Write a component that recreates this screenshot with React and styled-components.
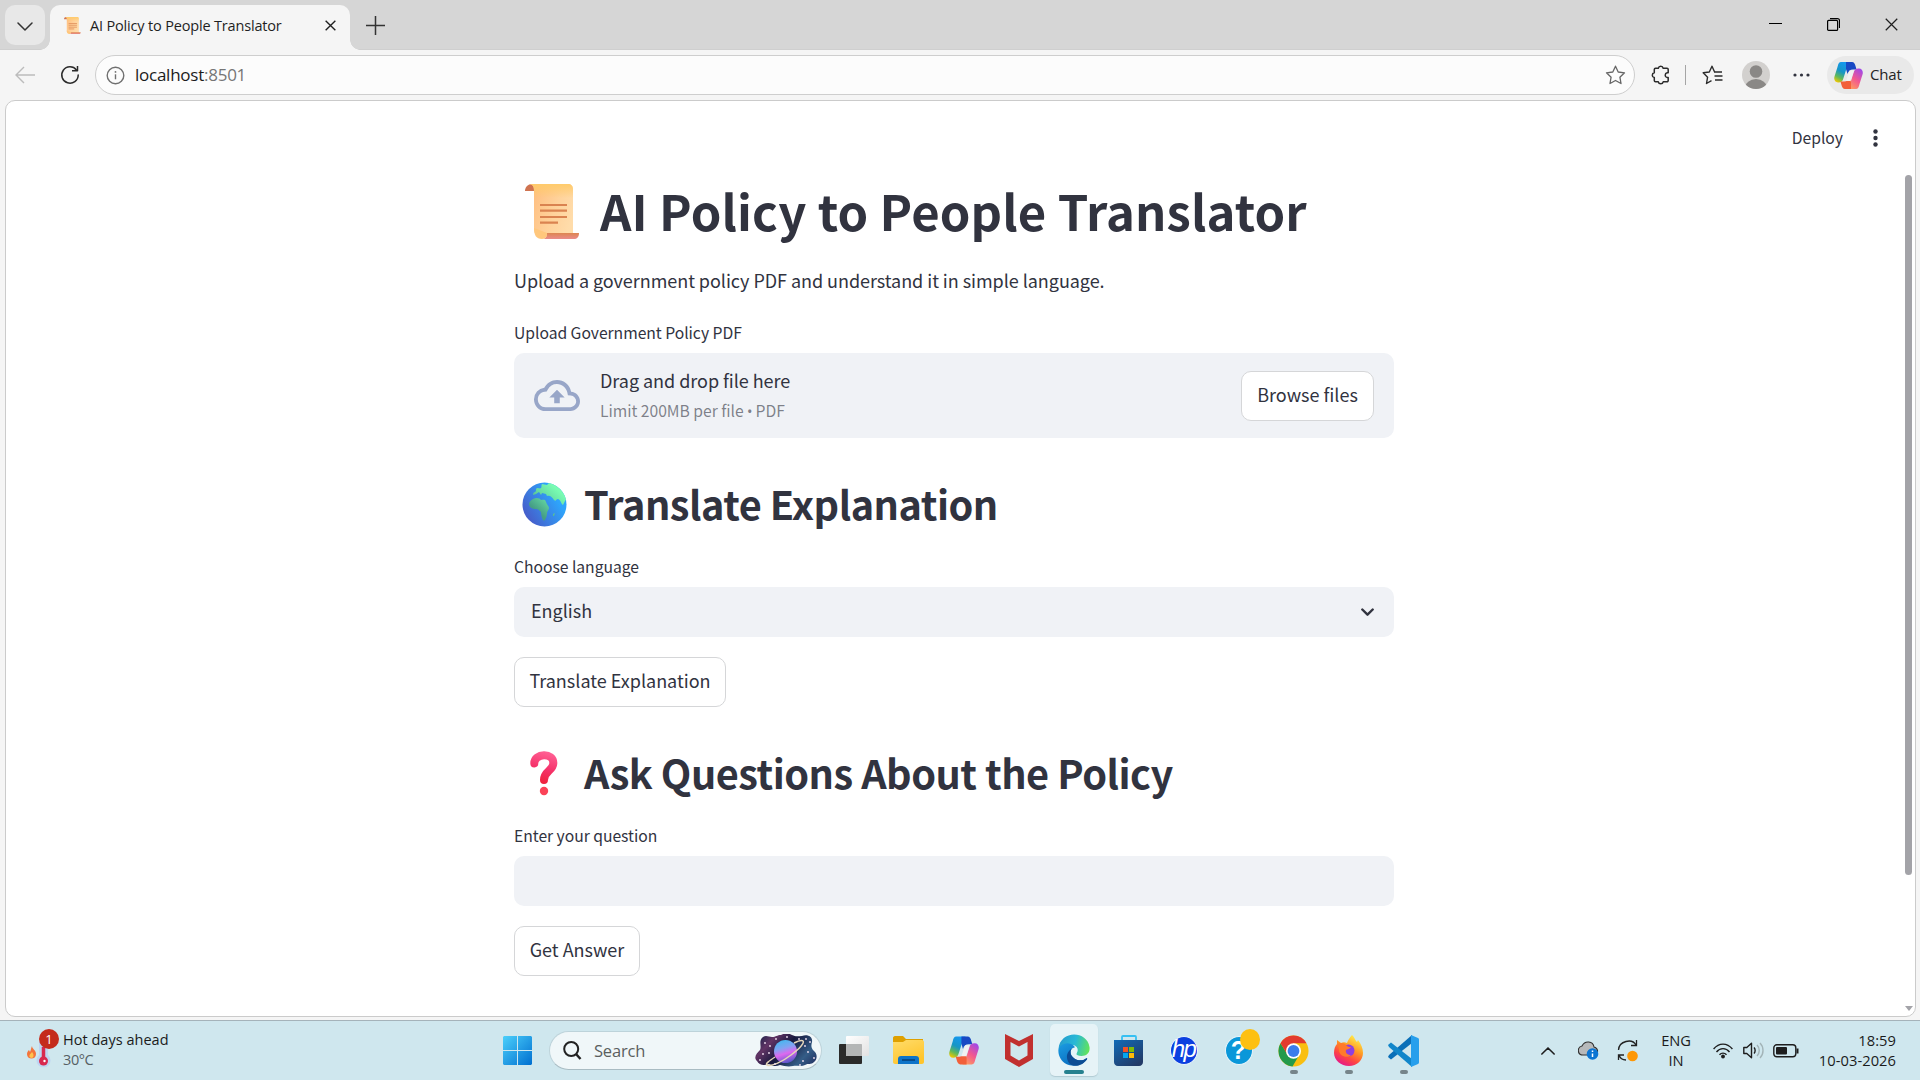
import React from "react";
import styled, { createGlobalStyle } from "styled-components";

const GlobalStyle = createGlobalStyle`
  * {
    box-sizing: border-box;
  }

  body {
    margin: 0;
    overflow: hidden;
    background: #f5f5f5;
  }

  svg {
    display: block;
    flex: none;
  }
`;

const sourceSans = `"Noto Sans CJK SC", "Source Sans Pro", sans-serif`;
const segoe = `"Open Sans", "Segoe UI", sans-serif`;

/* ---------- emoji ---------- */

const ScrollEmoji = ({ size = 55 }) => (
  <svg width={size} height={size} viewBox="0 0 55 55">
    <defs>
      <linearGradient id="paper" x1="0" y1="0.2" x2="1" y2="0.6">
        <stop offset="0" stopColor="#ffbd7e" />
        <stop offset="0.6" stopColor="#ffd29b" />
        <stop offset="1" stopColor="#ffdcaa" />
      </linearGradient>
      <linearGradient id="paperTop" x1="0" y1="0" x2="0" y2="1">
        <stop offset="0" stopColor="#ffcb6b" />
        <stop offset="1" stopColor="#ffcb6b" stopOpacity="0" />
      </linearGradient>
      <linearGradient id="curl" x1="0" y1="0" x2="0" y2="1">
        <stop offset="0" stopColor="#dd8550" />
        <stop offset="1" stopColor="#ea8c8b" />
      </linearGradient>
    </defs>
    <path d="M0 7C0 3 3 0 7 0h4v7z" fill="#cf7350" />
    <path d="M5 0h38c3 0 5 2 5 5v47H16c-5 0-7-3-7-7V7C9 3 8 1 5 0z" fill="url(#paper)" />
    <path d="M5 0h38c3 0 5 2 5 5v9H9V7C9 3 8 1 5 0z" fill="url(#paperTop)" />
    <path d="M22 49h32c0 4-2 6-5 6H17c3 0 5-2 5-6z" fill="url(#curl)" />
    <path d="M9 44c0 7 2 11 8 11 4 0 5-3 5-6z" fill="#ffc77c" />
    <path d="M15 21h27M15 26.600h27M15 33h27M15 38.600h18" stroke="#da8350" strokeWidth="2.200" />
  </svg>
);

const GlobeEmoji = () => (
  <svg width="45" height="45" viewBox="0 0 45 45">
    <defs>
      <linearGradient id="sea" x1="0.850" y1="0.500" x2="0.200" y2="0.900">
        <stop offset="0" stopColor="#2ea4fb" />
        <stop offset="1" stopColor="#4560cc" />
      </linearGradient>
      <linearGradient id="land" gradientUnits="userSpaceOnUse" x1="38" y1="10" x2="18" y2="32">
        <stop offset="0" stopColor="#79fcb2" />
        <stop offset="0.450" stopColor="#66dba3" />
        <stop offset="1" stopColor="#459e85" />
      </linearGradient>
      <clipPath id="globeClip">
        <circle cx="22.500" cy="22.500" r="22" />
      </clipPath>
    </defs>
    <circle cx="22.500" cy="22.500" r="22" fill="url(#sea)" />
    <g clipPath="url(#globeClip)" fill="url(#land)">
      <path d="M20 2l5 1 3-3c9 0 17 7 18 15l-3 4-2 4c-2-1-2-5-5-6-2 0-2 3-4 1-2-3-4-5-7-4l-1-2-4-1-1 2-2-3-3 2-3 1c0-2 1-3 2-3 2-1 0-3 2-4 2 0 3 1 4 0 1-2 0-3 1-4z" />
      <path d="M11 17c3-2 7-1 8 1 3 0 4-1 5 2 1 3 3 4 3 6 0 2-2 3-2 5 0 3-1 6-3 8-2-2-3-6-3-9-2-2-3-3-5-3-4 0-7-2-7-5 0-2 2-4 4-5z" />
      <path d="M31 32l2-1-1 3-1 0z" />
    </g>
  </svg>
);

const QuestionEmoji = () => (
  <svg width="45" height="45" viewBox="0 0 45 45">
    <defs>
      <linearGradient id="mark" gradientUnits="userSpaceOnUse" x1="26" y1="2" x2="18" y2="32">
        <stop offset="0" stopColor="#ff5e92" />
        <stop offset="0.500" stopColor="#f5346c" />
        <stop offset="1" stopColor="#ef213b" />
      </linearGradient>
    </defs>
    <path
      d="M12.300 12.500C12 2 32 1 31.300 12.500C31 20 22 20 22 29"
      fill="none"
      stroke="url(#mark)"
      strokeWidth="8"
      strokeLinecap="round"
    />
    <circle cx="22" cy="40" r="4.200" fill="#fb4358" />
  </svg>
);

/* ---------- browser icons ---------- */

const CopilotIcon = ({ width = 29, height = 27 }) => (
  <svg width={width} height={height} viewBox="0 0 29 27">
    <defs>
      <linearGradient id="copLeft" x1="0.600" y1="0" x2="0.200" y2="1">
        <stop offset="0" stopColor="#1597ef" />
        <stop offset="0.450" stopColor="#1696c6" />
        <stop offset="0.750" stopColor="#62b957" />
        <stop offset="1" stopColor="#f4c800" />
      </linearGradient>
      <linearGradient id="copRight" x1="0.800" y1="0" x2="0.200" y2="1">
        <stop offset="0" stopColor="#a148e8" />
        <stop offset="0.500" stopColor="#f2588f" />
        <stop offset="1" stopColor="#ff9f5c" />
      </linearGradient>
    </defs>
    <path d="M7 0h9l-3.500 6.500-3 9.500c-.8 3-2 4.500-5 4.500H4c-3 0-4.500-3-3.500-6l3-9.500C4.300 1.500 5 0 7 0z" fill="url(#copLeft)" />
    <path d="M12 0h6c2 0 3 2 3.500 4l1 3.500H19c-3 0-4.500 1.500-5.500 4.500l-1.500-5z" fill="#1849c4" />
    <path d="M22 27h-9l3.500-6.500 3-9.500c.8-3 2-4.500 5-4.500h.5c3 0 4.500 3 3.500 6l-3 9.500C24.700 25.500 24 27 22 27z" fill="url(#copRight)" />
    <path d="M17 27h-6c-2 0-3-2-3.500-4l-1-3.500H10c3 0 4.500-1.500 5.500-4.500l1.500 5z" fill="#f2603a" />
    <path d="M15.500 8.500h4.500l-3.500 10.500h-4.500z" fill="#f1f1f1" />
  </svg>
);

const ChevronIcon = ({ width = 16, height = 9, stroke = "#333", strokeWidth = 1.5, up }) => (
  <svg width={width} height={height} viewBox="0 0 16 9" fill="none" stroke={stroke} strokeWidth={strokeWidth}>
    <path d={up ? "M1 8l7-7 7 7" : "M1 1l7 7 7-7"} strokeLinecap="round" strokeLinejoin="round" />
  </svg>
);

const SelectArrow = () => (
  <svg width="13" height="9" viewBox="0 0 13 9" fill="none" stroke="#31333f" strokeWidth="2.400">
    <path d="M1.300 1.500l5.200 5.200 5.200-5.200" strokeLinecap="round" strokeLinejoin="round" />
  </svg>
);

const CloseIcon = ({ size = 12, weight = 1.5 }) => (
  <svg width={size} height={size} viewBox="0 0 12 12" stroke="#1f1f1f" strokeWidth={weight}>
    <path d="M.7.7l10.600 10.600M11.300.7L.7 11.300" />
  </svg>
);

const PlusIcon = () => (
  <svg width="19" height="19" viewBox="0 0 19 19" stroke="#333" strokeWidth="1.500">
    <path d="M9.500 0v19M0 9.500h19" />
  </svg>
);

const BackIcon = () => (
  <svg width="20" height="18" viewBox="0 0 20 18" fill="none" stroke="#bcbcbc" strokeWidth="1.400">
    <path d="M9 1L1 9l8 8M1 9h19" />
  </svg>
);

const ReloadIcon = () => (
  <svg width="20" height="20" viewBox="0 0 20 20" fill="none" stroke="#2b2b2b" strokeWidth="1.500">
    <path d="M16.500 5A8.200 8.200 0 1 0 18.200 10" strokeLinecap="round" />
    <path d="M12 5.800h5.500V1" strokeLinejoin="round" />
  </svg>
);

const InfoIcon = () => (
  <svg width="19" height="19" viewBox="0 0 19 19" fill="none" stroke="#707070" strokeWidth="1.400">
    <circle cx="9.500" cy="9.500" r="8.300" />
    <path d="M9.500 8.300v5" />
    <circle cx="9.500" cy="5.900" r="0.900" fill="#707070" stroke="none" />
  </svg>
);

const StarIcon = () => (
  <svg width="21" height="20" viewBox="0 0 21 20" fill="none" stroke="#666" strokeWidth="1.300">
    <path d="M10.500 1.200l2.700 5.800 6.300.8-4.600 4.400 1.100 6.300-5.500-3-5.500 3 1.100-6.300L1.500 7.800 7.800 7z" strokeLinejoin="round" />
  </svg>
);

const PuzzleIcon = () => (
  <svg width="19" height="20" viewBox="0 0 19 20" fill="none" stroke="#2b2b2b" strokeWidth="1.500">
    <path
      d="M4.500 3.300h2.800a2.500 2.500 0 0 1 4.900 0h3.800a1.200 1.200 0 0 1 1.200 1.200v3.200h-1a2.500 2.500 0 0 0 0 4.900h1v3a1.200 1.200 0 0 1-1.200 1.200h-3.800a2.500 2.500 0 0 1-4.900 0H4.500a1.200 1.200 0 0 1-1.200-1.200v-3a2.500 2.500 0 0 1 0-4.900V4.500a1.200 1.200 0 0 1 1.200-1.200z"
      strokeLinejoin="round"
    />
  </svg>
);

const FavoritesIcon = () => (
  <svg width="21" height="20" viewBox="0 0 21 20" fill="none" stroke="#2b2b2b" strokeWidth="1.400">
    <path d="M12.600 7L10 1.200 7.300 7 1.200 7.800l4.400 4.400-1.100 6.300L9.500 15.700" strokeLinejoin="round" />
    <path d="M12 7h8M12.500 11h8M13 15h7.500" />
  </svg>
);

const AvatarIcon = () => (
  <svg width="28" height="28" viewBox="0 0 28 28">
    <defs>
      <clipPath id="avatarClip">
        <circle cx="14" cy="14" r="14" />
      </clipPath>
    </defs>
    <g clipPath="url(#avatarClip)">
      <rect width="28" height="28" fill="#d2d0ce" />
      <circle cx="14" cy="10.500" r="6.300" fill="#8a8886" />
      <ellipse cx="14" cy="27" rx="11" ry="9" fill="#8a8886" />
    </g>
  </svg>
);

const DotsIcon = ({ vertical }) => (
  <svg width={vertical ? 5 : 17} height={vertical ? 18 : 4} viewBox={vertical ? "0 0 5 18" : "0 0 17 4"} fill="#31333f">
    {[0, 1, 2].map((i) =>
      vertical ? (
        <circle key={i} cx="2.500" cy={2.5 + i * 6.5} r="2.200" />
      ) : (
        <circle key={i} cx={2 + i * 6.5} cy="2" r="1.600" />
      )
    )}
  </svg>
);

const CloudUploadIcon = () => (
  <svg width="46" height="31" viewBox="0 4 24 16" preserveAspectRatio="none" fill="#98a6c8">
    <path d="M19.350 10.040A7.490 7.490 0 0 0 12 4C9.110 4 6.600 5.640 5.350 8.040A5.994 5.994 0 0 0 0 14c0 3.310 2.690 6 6 6h13c2.760 0 5-2.240 5-5 0-2.640-2.050-4.780-4.650-4.960zM19 18H6c-2.210 0-4-1.790-4-4 0-2.050 1.530-3.760 3.560-3.970l1.070-.11.500-.95A5.469 5.469 0 0 1 12 6c2.620 0 4.880 1.860 5.390 4.430l.3 1.500 1.530.11A2.980 2.980 0 0 1 22 15c0 1.650-1.350 3-3 3zM8 13h2.550v3h2.900v-3H16l-4-4z" />
  </svg>
);

/* ---------- taskbar icons ---------- */

const WeatherIcon = () => (
  <svg width="38" height="36" viewBox="0 0 38 36">
    <path d="M9 13c0 3 4 4 4 8 0 3-2 4.500-4.500 4.500S4 24 4 21c0-2 1-3 2-4l1 2c1-2 1-4 2-6z" fill="#f4743b" />
    <path d="M9 19c2 2 2 5 0 6-2 0-3-1-2.500-3z" fill="#ffc24d" />
    <path d="M16 8h9v14a7 7 0 1 1-9 0z" fill="#bed5f2" />
    <path d="M20.500 14v13" stroke="#d8284f" strokeWidth="3.500" />
    <circle cx="20.500" cy="28" r="4.500" fill="#d8284f" />
    <circle cx="21.500" cy="28" r="1.200" fill="#fff" />
  </svg>
);

const StartIcon = () => (
  <svg width="29" height="29" viewBox="0 0 29 29">
    <defs>
      <linearGradient id="win" gradientUnits="userSpaceOnUse" x1="0" y1="0" x2="29" y2="29">
        <stop offset="0" stopColor="#4cd0fb" />
        <stop offset="1" stopColor="#006fd0" />
      </linearGradient>
    </defs>
    <path d="M1 0h13v14H0V1zM15 0h13l1 1v13H15zM0 15h14v14H1l-1-1zM15 15h14v13l-1 1H15z" fill="url(#win)" />
  </svg>
);

const SearchIcon = () => (
  <svg width="19" height="19" viewBox="0 0 19 19" fill="none" stroke="#222" strokeWidth="2">
    <circle cx="8.200" cy="8" r="7" />
    <path d="M13 13l4.500 5" strokeWidth="2.500" />
  </svg>
);

const PlanetIcon = () => (
  <svg width="62" height="33" viewBox="0 0 62 33">
    <defs>
      <linearGradient id="space" x1="0" y1="0.300" x2="1" y2="0.800">
        <stop offset="0" stopColor="#2b2750" />
        <stop offset="0.180" stopColor="#613465" />
        <stop offset="0.450" stopColor="#17183d" />
        <stop offset="0.800" stopColor="#345d87" />
        <stop offset="1" stopColor="#263968" />
      </linearGradient>
      <linearGradient id="planet" x1="0.300" y1="0" x2="0.600" y2="1">
        <stop offset="0" stopColor="#42b8ef" />
        <stop offset="0.350" stopColor="#82a3f2" />
        <stop offset="0.600" stopColor="#dd68ef" />
        <stop offset="1" stopColor="#5557c7" />
      </linearGradient>
    </defs>
    <path
      d="M8 3c3-2 6 0 9 0 4 0 5-2 9-2 3-2 8-2 11 0 4 2 6 1 10 1 6-2 11 1 10 6-1 4-1 6 2 9 4 3 3 9 0 11-3 3-6 1-9 3-4 2-8 0-12 1-5 1-9 0-13-1-4 2-8 1-11-1-5 2-10 1-12-3-4-4 0-8 3-11 2-4-2-9 3-13z"
      fill="url(#space)"
    />
    <circle cx="30.500" cy="17.500" r="11.500" fill="url(#planet)" />
    <path d="M20 23c-6 4-10 7-8 8 4 2 15-3 24-10 8-6 14-12 12-14-1-1-5 0-9 2" fill="none" stroke="#e5d6b8" strokeWidth="1.500" />
    <g fill="#f0dff0">
      {[[10, 9], [15, 12], [8, 20], [14, 19], [5, 26], [21, 5], [32, 3], [44, 5], [51, 5], [55, 8], [50, 12], [53, 18], [48, 27], [59, 24], [45, 31], [20, 30]].map(([x, y]) => (
        <circle key={`${x}-${y}`} cx={x} cy={y} r="0.900" />
      ))}
    </g>
  </svg>
);

const TaskViewIcon = () => (
  <svg width="30" height="29" viewBox="0 0 30 29">
    <defs>
      <linearGradient id="pane" x1="0" y1="0" x2="1" y2="1">
        <stop offset="0" stopColor="#fff" />
        <stop offset="1" stopColor="#e2e2e2" />
      </linearGradient>
    </defs>
    <rect y="8" width="23" height="20" rx="1" fill="#2b2b2a" />
    <rect x="7" width="23" height="20" rx="1" fill="url(#pane)" />
    <path d="M7 8h15c.6 0 1 .4 1 1v11H8c-.6 0-1-.4-1-1z" fill="#b4b6b6" />
  </svg>
);

const ExplorerIcon = () => (
  <svg width="31" height="29" viewBox="0 0 31 29">
    <defs>
      <linearGradient id="folder" x1="0" y1="0" x2="0.500" y2="1">
        <stop offset="0" stopColor="#ffdc6b" />
        <stop offset="1" stopColor="#ffc52c" />
      </linearGradient>
    </defs>
    <path d="M0 2c0-1 .7-2 2-2h8l3 3h17v6H0z" fill="#dfa000" />
    <path d="M0 6h10l3-2h16c1 0 2 1 2 2v20c0 1-1 2-2 2H2c-1 0-2-1-2-2z" fill="url(#folder)" />
    <path d="M5 28v-5c0-2 1-3 3-3h15c2 0 3 1 3 3v5z" fill="#0e74c8" />
    <path d="M9 24h13" stroke="#063f78" strokeWidth="1.500" />
  </svg>
);

const McAfeeIcon = () => (
  <svg width="28" height="33" viewBox="0 0 28 33">
    <path d="M0 0l14 7L28 0v25l-14 8-14-8zM5.500 8v13.500L14 26.500l8.500-5V8L14 12.500z" fill="#c1302f" fillRule="evenodd" />
  </svg>
);

const EdgeIcon = () => (
  <svg width="32" height="32" viewBox="0 0 32 32">
    <defs>
      <linearGradient id="edgeTop" x1="0" y1="0.400" x2="1" y2="0.600">
        <stop offset="0" stopColor="#269cce" />
        <stop offset="0.500" stopColor="#28b8d7" />
        <stop offset="1" stopColor="#62e45a" />
      </linearGradient>
      <linearGradient id="edgeBody" x1="0" y1="0" x2="0.700" y2="1">
        <stop offset="0" stopColor="#1b9de2" />
        <stop offset="1" stopColor="#0967bb" />
      </linearGradient>
    </defs>
    <path d="M.5 15C2-4 29-4 31.500 13c.8 6-3 9-8 9-4 0-6-1.500-5-3 3-4 0-8-5-8-6 0-11 2-13 4z" fill="url(#edgeTop)" />
    <path d="M.5 15C3 10 8 8 13 10c2 .8 3.500 2 4 3.500-4 0-5 4-4 7 2 5 10 8 15 4 1-.6 1.500 0 1 .8C23 34 8 34 2.500 24.500 1 21.500 0 19 .5 15z" fill="url(#edgeBody)" />
    <path d="M17 13.500c-4 0-5 4-4 7 2 5 10 8 15 4 1-.6 1.500 0 1 .8-4 6-11 8-16 5.500-6-4-6-15 4-17.300z" fill="#0d4c94" />
    <path d="M17.500 13.500c-3 .5-5 3-4 6 1 2 3 3 5 3.500-1-1.500-1-2 0-3.500 1.500-2 .8-4.500-1-6z" fill="#e4f4f8" />
  </svg>
);

const StoreIcon = () => (
  <svg width="29" height="31" viewBox="0 0 29 31">
    <defs>
      <linearGradient id="bag" x1="0" y1="0" x2="0.700" y2="1">
        <stop offset="0" stopColor="#116bb7" />
        <stop offset="1" stopColor="#223b68" />
      </linearGradient>
    </defs>
    <path d="M8 6V2c0-.6.400-1 1-1h12c.6 0 1 .4 1 1v4" fill="none" stroke="#36c0f2" strokeWidth="1.800" />
    <path d="M0 5h29v22c0 2-1.500 4-4 4H4c-2.500 0-4-2-4-4z" fill="url(#bag)" />
    <path d="M9 12h5v5H9z" fill="#f35325" />
    <path d="M15 12h5v5h-5z" fill="#81bc06" />
    <path d="M9 18h5v5H9z" fill="#05a6f0" />
    <path d="M15 18h5v5h-5z" fill="#ffba08" />
  </svg>
);

const ChromeIcon = () => (
  <svg width="31" height="32" viewBox="0 0 31 31" preserveAspectRatio="none">
    <circle cx="15.500" cy="15.500" r="15" fill="#f9bf10" />
    <path d="M2.500 8A15 15 0 0 0 14.500 30.500L21.500 19 9.500 19z" fill="#239a4b" />
    <path d="M2.500 8A15 15 0 0 1 28.500 8H15.500L9.500 19z" fill="#e33b2e" />
    <circle cx="15.500" cy="15.500" r="7.500" fill="#fff" />
    <circle cx="15.500" cy="15.500" r="5.900" fill="#3b7ded" />
  </svg>
);

const FirefoxIcon = () => (
  <svg width="29" height="31" viewBox="0 0 29 31">
    <defs>
      <linearGradient id="fox" x1="0.800" y1="0.050" x2="0.300" y2="1">
        <stop offset="0" stopColor="#fff04d" />
        <stop offset="0.400" stopColor="#ff9a24" />
        <stop offset="0.700" stopColor="#ff4740" />
        <stop offset="1" stopColor="#e3168d" />
      </linearGradient>
    </defs>
    <path d="M18 0c3 3 3 5 5 7l1-2c3 4 5 8 5 13 0 7-6 13-14 13S0 25 0 18c0-4 1-7 3-9V5l4 3c2-1 4-1 6 0 1-3 3-6 5-8z" fill="url(#fox)" />
    <circle cx="14.500" cy="15.500" r="6" fill="#8d3fe0" />
    <path d="M4 9c3-2 7-1 9 2 1 1 3 1 4 1-1 2-4 2-5 3-1 3 2 5 5 5-4 4-12 1-12-5z" fill="#ff7a2b" />
  </svg>
);

const VsCodeIcon = () => (
  <svg width="31" height="32" viewBox="0 0 31 32">
    <path d="M0 22l3 2.500L24 8V0L1 20z" fill="#0a6fb8" />
    <path d="M0 10l3-2.500L24 24v8L1 12z" fill="#1186ca" />
    <path d="M23 0l7 3c.6.300 1 1 1 1.700v22.600c0 .7-.4 1.400-1 1.700l-7 3z" fill="#279fec" />
  </svg>
);

const CloudTrayIcon = () => (
  <svg width="21" height="19" viewBox="0 0 21 19">
    <path d="M5 14C-1 14-1 6 4 5c3-6 11-5 12 1 4 1 5 6 1 8z" fill="#b7b9ba" stroke="#303030" strokeWidth="1.100" />
    <circle cx="14.500" cy="13" r="5.800" fill="#0b75d3" />
    <path d="M14.500 12.500v3.500M14.500 9.500v1.500" stroke="#fff" strokeWidth="1.500" />
  </svg>
);

const SyncTrayIcon = () => (
  <svg width="22" height="22" viewBox="0 0 22 22" fill="none" stroke="#222" strokeWidth="1.300">
    <path d="M1.500 10C2 1 15-2 19 5M19.500 0v5.500H14M9 20C6 20 3 18 2 15M1.500 20v-5H7" />
    <circle cx="15.500" cy="16" r="5.300" fill="#fd9706" stroke="none" />
  </svg>
);

const WifiIcon = () => (
  <svg width="20" height="16" viewBox="0 0 20 16" fill="none" stroke="#1d1d1d" strokeWidth="1.400">
    <path d="M.6 6C6-.5 14-.5 19.400 6M3.500 9c3.500-4.500 9.500-4.500 13 0M6.500 11.800c2-2.300 5-2.300 7 0" />
    <circle cx="10" cy="13.500" r="1.900" fill="#1d1d1d" stroke="none" />
  </svg>
);

const VolumeIcon = () => (
  <svg width="21" height="17" viewBox="0 0 21 17" fill="none" stroke="#1d1d1d" strokeWidth="1.400">
    <path d="M.8 5.500h3L8.500 1.200v14.600L3.800 11.500h-3z" strokeLinejoin="round" />
    <path d="M11 5.500c1.500 1.500 1.500 4.500 0 6" />
    <path d="M14 3c3 3 3 8 0 11M17 1c4 4 4 11 0 15" stroke="#a3b4b8" />
  </svg>
);

const BatteryIcon = () => (
  <svg width="26" height="14" viewBox="0 0 26 14" fill="none" stroke="#1d1d1d" strokeWidth="1.400">
    <rect x="0.800" y="0.800" width="22" height="12" rx="3" />
    <path d="M24.500 4.500v5" strokeWidth="2" />
    <rect x="3" y="3" width="11" height="7.600" rx="1" fill="#1d1d1d" stroke="none" />
  </svg>
);

/* ---------- layout ---------- */

const Screen = styled.div`
  display: flex;
  flex-direction: column;
  width: 1920px;
  height: 1080px;
  background: #f5f5f5;
  overflow: hidden;
`;

const TabStrip = styled.div`
  display: flex;
  align-items: flex-end;
  height: 50px;
  padding-left: 5px;
  background: #d6d6d6;
  box-shadow: inset 0 -1px 0 #cfcfcf;
`;

const TabMenuButton = styled.div`
  display: flex;
  align-items: center;
  justify-content: center;
  width: 40px;
  height: 40px;
  margin: 0 5px 5px 0;
  padding-top: 3px;
  border-radius: 10px;
  background: #e8e8e8;
`;

const Tab = styled.div`
  position: relative;
  display: flex;
  align-items: center;
  width: 300px;
  height: 45px;
  padding: 0 14px 5px 14px;
  border-radius: 10px 10px 0 0;
  background: #f5f5f5;

  &::before,
  &::after {
    content: "";
    position: absolute;
    bottom: 0;
    width: 10px;
    height: 10px;
  }

  &::before {
    left: -10px;
    background: radial-gradient(circle at 0 0, transparent 9.5px, #f5f5f5 10px);
  }

  &::after {
    right: -10px;
    background: radial-gradient(circle at 100% 0, transparent 9.5px, #f5f5f5 10px);
  }
`;

const TabTitle = styled.span`
  flex: 1;
  margin: 2px 0 0 9px;
  color: #1f1f1f;
  font: 400 14.5px/20px ${segoe};
  letter-spacing: -0.17px;
  white-space: nowrap;
`;

const NewTab = styled.div`
  display: flex;
  align-items: center;
  height: 50px;
  padding-left: 16px;
`;

const WindowControls = styled.div`
  display: flex;
  align-items: center;
  gap: 45px;
  height: 50px;
  margin-left: auto;
  padding: 0 22px 1px 0;
`;

const MinimizeGlyph = styled.div`
  width: 13px;
  height: 1px;
  margin-bottom: 2px;
  background: #000;
`;

const Toolbar = styled.div`
  display: flex;
  align-items: center;
  height: 50px;
  padding: 0 6px 0 15px;
`;

const ToolItem = styled.div`
  margin-right: ${(p) => p.$gap}px;
`;

const AddressBar = styled.div`
  display: flex;
  align-items: center;
  width: 1540px;
  height: 40px;
  margin: 0 16px 0 15px;
  padding: 0 8px 0 10px;
  border: 1px solid #cecece;
  border-radius: 20px;
  background: #fcfcfc;
`;

const Url = styled.div`
  flex: 1;
  margin-left: 10px;
  color: #1b1b1b;
  font: 400 17px/24px ${segoe};
  letter-spacing: -0.25px;

  span {
    color: #767676;
  }
`;

const Divider = styled.div`
  width: 1px;
  height: 20px;
  margin: 0 16px 0 15px;
  background: #a5a5a5;
`;

const ChatButton = styled.div`
  display: flex;
  align-items: center;
  gap: 7px;
  width: 87px;
  height: 38px;
  margin-left: auto;
  padding-left: 7px;
  border-radius: 19px;
  background: #e9e9e9;
  color: #242424;
  font: 400 15px/20px ${segoe};
  letter-spacing: -0.2px;

  span {
    margin-bottom: 2px;
  }
`;

const PageFrame = styled.div`
  position: relative;
  height: 917px;
  margin: 0 4px 3px 5px;
  border: 1px solid #cbcbcb;
  border-radius: 10px;
  background: #fff;
`;

const AppHeader = styled.header`
  position: absolute;
  top: 24px;
  right: 37px;
  display: flex;
  align-items: center;
  gap: 30px;
  color: #31333f;
  font: 400 15.7px/26px ${sourceSans};
`;

const ScrollTrack = styled.div`
  position: absolute;
  top: 74px;
  right: 2px;
  bottom: 5px;
  display: flex;
  flex-direction: column;
  align-items: center;
  justify-content: space-between;
  width: 9px;
`;

const ScrollThumb = styled.div`
  width: 7px;
  height: 700px;
  border-radius: 4px;
  background: #a3a3a8;
`;

const ScrollArrow = styled.div`
  border: 4px solid transparent;
  border-top: 5px solid #a3a3a8;
  border-bottom: 0;
`;

const Main = styled.main`
  display: flex;
  flex-direction: column;
  align-items: flex-start;
  width: 880px;
  margin-left: 508px;
  padding-top: 76px;
  color: #31333f;
  font-family: ${sourceSans};
`;

const Title = styled.h1`
  display: flex;
  align-items: center;
  gap: 20px;
  height: 66px;
  margin: 0;
  padding-left: 11px;
  font-size: 49px;
  font-weight: 700;
  line-height: 66px;
  letter-spacing: 0.13px;
  white-space: nowrap;

  svg {
    margin-top: 2px;
  }
`;

const Subtitle = styled.h2`
  display: flex;
  align-items: center;
  gap: 17px;
  height: 54px;
  margin: 38px 0 0;
  padding-left: 8px;
  font-size: 39.7px;
  font-weight: 600;
  line-height: 54px;
  letter-spacing: -0.5px;
  white-space: nowrap;

  svg {
    margin-top: 2px;
  }
`;

const Intro = styled.p`
  margin: 21px 0 0;
  font-size: 18px;
  line-height: 32px;
  letter-spacing: -0.045px;
`;

const Label = styled.label`
  margin: 23px 0 6px;
  font-size: 15.7px;
  line-height: 28px;
  letter-spacing: -0.03px;
`;

const Dropzone = styled.section`
  display: flex;
  align-items: center;
  width: 100%;
  height: 85px;
  padding: 0 20px;
  border-radius: 10px;
  background: #f0f2f6;
`;

const DropText = styled.div`
  flex: 1;
  margin: -2px 0 0 20px;
  font-size: 18px;
  line-height: 32px;
  letter-spacing: -0.04px;

  small {
    display: block;
    margin-top: 1px;
    color: rgba(49, 51, 63, 0.6);
    font-size: 15.7px;
    line-height: 28px;
  }
`;

const Bullet = styled.span`
  font-family: "Noto Sans", sans-serif;
  font-size: 14.5px;
  letter-spacing: -0.4px;
`;

const Button = styled.button`
  height: 50px;
  width: ${(p) => p.$width}px;
  margin-top: ${(p) => p.$top || 0}px;
  padding: 0 0 4px;
  border: 1px solid #d5d6d8;
  border-radius: 10px;
  background: #fff;
  color: inherit;
  font: 400 18px/32px ${sourceSans};
  white-space: nowrap;
`;

const Field = styled.div`
  display: flex;
  align-items: center;
  justify-content: space-between;
  width: 100%;
  height: 50px;
  padding: 0 20px 0 17px;
  border-radius: 10px;
  background: #f0f2f6;
  font-size: 18px;

  span {
    margin-bottom: 4px;
  }
`;

const Taskbar = styled.footer`
  display: flex;
  align-items: center;
  height: 60px;
  border-top: 1px solid #a5b3ba;
  background: #cfe7ee;
  color: #1b1b1b;
  font-family: ${segoe};
`;

const Weather = styled.div`
  position: relative;
  display: flex;
  align-items: center;
  width: 503px;
  padding-left: 23px;
`;

const Badge = styled.span`
  position: absolute;
  top: -2px;
  left: 39px;
  width: 20px;
  height: 20px;
  border-radius: 50%;
  background: #c42b1c;
  color: #fff;
  font-size: 13px;
  line-height: 20px;
  text-align: center;
`;

const WeatherText = styled.div`
  margin: -1px 0 0 2px;
  font-size: 14.5px;
  line-height: 20px;
  letter-spacing: 0.02px;

  span {
    display: block;
    color: #566064;
    letter-spacing: -0.4px;
  }
`;

const SearchBox = styled.div`
  display: flex;
  align-items: center;
  width: 273px;
  height: 39px;
  margin: 0 4px 0 17px;
  padding: 0 4px 0 13px;
  border: 1px solid #bdd3da;
  border-bottom-color: #a9bcc3;
  border-radius: 20px;
  background: #f0f7f9;
  color: #5b5f60;
  font-size: 16.5px;

  span {
    flex: 1;
    margin-left: 12px;
    letter-spacing: -0.2px;
  }
`;

const TaskSlot = styled.div`
  position: relative;
  display: flex;
  align-items: center;
  justify-content: center;
  width: 55px;
  height: 59px;
`;

const ActiveTile = styled.div`
  display: flex;
  align-items: center;
  justify-content: center;
  width: 48px;
  height: 52px;
  margin-top: -1px;
  border-radius: 5px;
  background: #e6f3f7;
  box-shadow: 0 1px 1px rgba(90, 120, 130, 0.25);
`;

const RunningMark = styled.i`
  position: absolute;
  bottom: 6px;
  left: 50%;
  width: ${(p) => (p.$active ? 20 : 8)}px;
  height: 4px;
  border-radius: 2px;
  background: ${(p) => (p.$active ? "#26818f" : "#76858a")};
  transform: translateX(-50%);
`;

const RoundLogo = styled.div`
  width: 28px;
  height: 29px;
  border: 1px solid #e9f5fa;
  border-radius: 50%;
  background: ${(p) => p.$color};
  color: #fff;
  font: ${(p) => p.$font};
  letter-spacing: ${(p) => p.$spacing || 0}px;
  text-align: center;
`;

const AlertDot = styled.i`
  position: absolute;
  top: 8px;
  right: 6px;
  width: 20px;
  height: 21px;
  border-radius: 50%;
  background: #fdc012;
`;

const Tray = styled.div`
  display: flex;
  align-items: center;
  height: 59px;
  margin-left: auto;
  padding-right: 24px;
`;

const TrayText = styled.div`
  width: ${(p) => p.$width}px;
  margin-top: -1px;
  margin-right: ${(p) => p.$gap || 0}px;
  font-size: 14.7px;
  line-height: 20px;
  letter-spacing: ${(p) => p.$spacing || 0}px;
  text-align: ${(p) => p.$align};
  white-space: nowrap;
`;

const BrowserChrome = () => (
  <>
    <TabStrip>
      <TabMenuButton>
        <ChevronIcon />
      </TabMenuButton>
      <Tab>
        <ScrollEmoji size={17} />
        <TabTitle>AI Policy to People Translator</TabTitle>
        <CloseIcon size={11} />
      </Tab>
      <NewTab>
        <PlusIcon />
      </NewTab>
      <WindowControls>
        <MinimizeGlyph />
        <svg width="13" height="13" viewBox="0 0 13 13" fill="none" stroke="#000" strokeWidth="1.200">
          <rect x="0.600" y="2.400" width="10" height="10" rx="1" />
          <path d="M3 .6h7.500c1.200 0 2 .8 2 2V10" />
        </svg>
        <CloseIcon size={13} weight={1.1} />
      </WindowControls>
    </TabStrip>
    <Toolbar>
      <ToolItem $gap={25}>
        <BackIcon />
      </ToolItem>
      <ReloadIcon />
      <AddressBar>
        <InfoIcon />
        <Url>
          localhost<span>:8501</span>
        </Url>
        <StarIcon />
      </AddressBar>
      <PuzzleIcon />
      <Divider />
      <ToolItem $gap={19}>
        <FavoritesIcon />
      </ToolItem>
      <ToolItem $gap={23}>
        <AvatarIcon />
      </ToolItem>
      <DotsIcon />
      <ChatButton>
        <CopilotIcon />
        <span>Chat</span>
      </ChatButton>
    </Toolbar>
  </>
);

const TranslatorPage = () => (
  <PageFrame>
    <AppHeader>
      Deploy
      <DotsIcon vertical />
    </AppHeader>
    <Main>
      <Title>
        <ScrollEmoji />
        AI Policy to People Translator
      </Title>
      <Intro>Upload a government policy PDF and understand it in simple language.</Intro>
      <Label>Upload Government Policy PDF</Label>
      <Dropzone>
        <CloudUploadIcon />
        <DropText>
          Drag and drop file here
          <small>
            Limit 200MB per file <Bullet>•</Bullet> PDF
          </small>
        </DropText>
        <Button $width={133}>Browse files</Button>
      </Dropzone>

      <Subtitle>
        <GlobeEmoji />
        Translate Explanation
      </Subtitle>
      <Label>Choose language</Label>
      <Field>
        <span>English</span>
        <SelectArrow />
      </Field>
      <Button $width={212} $top={20}>
        Translate Explanation
      </Button>

      <Subtitle>
        <QuestionEmoji />
        Ask Questions About the Policy
      </Subtitle>
      <Label>Enter your question</Label>
      <Field />
      <Button $width={126} $top={20}>
        Get Answer
      </Button>
    </Main>
    <ScrollTrack>
      <ScrollThumb />
      <ScrollArrow />
    </ScrollTrack>
  </PageFrame>
);

const WindowsTaskbar = () => (
  <Taskbar>
    <Weather>
      <WeatherIcon />
      <Badge>1</Badge>
      <WeatherText>
        Hot days ahead
        <span>30°C</span>
      </WeatherText>
    </Weather>
    <StartIcon />
    <SearchBox>
      <SearchIcon />
      <span>Search</span>
      <PlanetIcon />
    </SearchBox>
    <TaskSlot>
      <TaskViewIcon />
    </TaskSlot>
    <TaskSlot>
      <ExplorerIcon />
    </TaskSlot>
    <TaskSlot>
      <CopilotIcon width={30} height={29} />
    </TaskSlot>
    <TaskSlot>
      <McAfeeIcon />
    </TaskSlot>
    <TaskSlot>
      <ActiveTile>
        <EdgeIcon />
      </ActiveTile>
      <RunningMark $active />
    </TaskSlot>
    <TaskSlot>
      <StoreIcon />
    </TaskSlot>
    <TaskSlot>
      <RoundLogo $color="#0b3fe0" $font={`italic 400 24px/23px "Liberation Sans", sans-serif`} $spacing={-1.5}>
        hp
      </RoundLogo>
    </TaskSlot>
    <TaskSlot>
      <RoundLogo $color="#0a97d9" $font={`700 25px/27px "Liberation Sans", sans-serif`}>
        ?
      </RoundLogo>
      <AlertDot />
    </TaskSlot>
    <TaskSlot>
      <ChromeIcon />
      <RunningMark />
    </TaskSlot>
    <TaskSlot>
      <FirefoxIcon />
      <RunningMark />
    </TaskSlot>
    <TaskSlot>
      <VsCodeIcon />
      <RunningMark />
    </TaskSlot>
    <Tray>
      <ToolItem $gap={23}>
        <ChevronIcon up width={14} height={8} stroke="#1d1d1d" strokeWidth={1.8} />
      </ToolItem>
      <ToolItem $gap={18}>
        <CloudTrayIcon />
      </ToolItem>
      <ToolItem $gap={19}>
        <SyncTrayIcon />
      </ToolItem>
      <TrayText $width={36} $gap={19} $align="center" $spacing={-0.2}>
        ENG
        <br />
        IN
      </TrayText>
      <ToolItem $gap={10}>
        <WifiIcon />
      </ToolItem>
      <ToolItem $gap={9}>
        <VolumeIcon />
      </ToolItem>
      <BatteryIcon />
      <TrayText $width={97} $align="right" $spacing={0.05}>
        18:59
        <br />
        10-03-2026
      </TrayText>
    </Tray>
  </Taskbar>
);

const App = () => (
  <Screen>
    <GlobalStyle />
    <BrowserChrome />
    <TranslatorPage />
    <WindowsTaskbar />
  </Screen>
);

export default App;
